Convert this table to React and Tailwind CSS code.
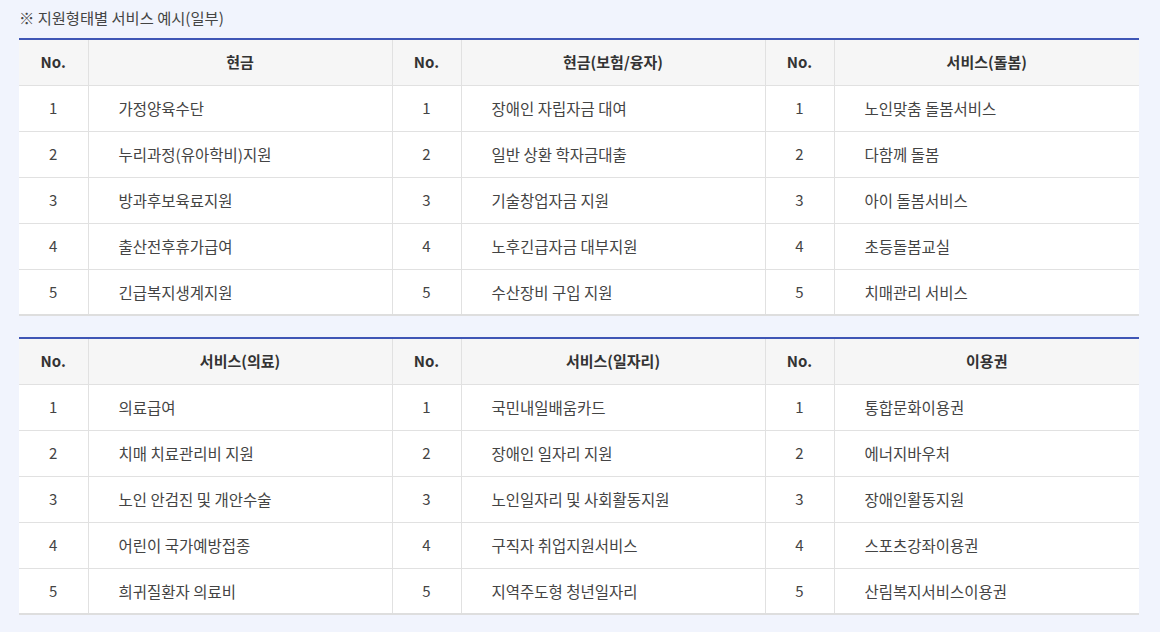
const tables = [
  {
    heads: ['현금', '현금(보험/융자)', '서비스(돌봄)'],
    cols: [
      ['가정양육수단', '누리과정(유아학비)지원', '방과후보육료지원', '출산전후휴가급여', '긴급복지생계지원'],
      ['장애인 자립자금 대여', '일반 상환 학자금대출', '기술창업자금 지원', '노후긴급자금 대부지원', '수산장비 구입 지원'],
      ['노인맞춤 돌봄서비스', '다함께 돌봄', '아이 돌봄서비스', '초등돌봄교실', '치매관리 서비스'],
    ],
  },
  {
    heads: ['서비스(의료)', '서비스(일자리)', '이용권'],
    cols: [
      ['의료급여', '치매 치료관리비 지원', '노인 안검진 및 개안수술', '어린이 국가예방접종', '희귀질환자 의료비'],
      ['국민내일배움카드', '장애인 일자리 지원', '노인일자리 및 사회활동지원', '구직자 취업지원서비스', '지역주도형 청년일자리'],
      ['통합문화이용권', '에너지바우처', '장애인활동지원', '스포츠강좌이용권', '산림복지서비스이용권'],
    ],
  },
];

function ServiceTable({ data }) {
  return (
    <table className="w-[1120px] table-fixed border-collapse border-t-2 border-t-[#3f56b6] border-b-2 border-b-[#dedede] bg-white">
      <colgroup>
        <col className="w-[69px]" />
        <col className="w-[304px]" />
        <col className="w-[69px]" />
        <col className="w-[304px]" />
        <col className="w-[69px]" />
        <col />
      </colgroup>
      <thead>
        <tr className="h-[46px] bg-[#f6f6f6] border-b border-[#e1e1e1]">
          {data.heads.map((h, i) => (
            <>
              <th key={'n' + i} className={`font-bold text-[15px] text-[#333] text-center ${i > 0 ? 'border-l border-[#e1e1e1]' : ''}`}>No.</th>
              <th key={'h' + i} className="font-bold text-[15px] text-[#333] text-center border-l border-[#e1e1e1]">{h}</th>
            </>
          ))}
        </tr>
      </thead>
      <tbody>
        {[0, 1, 2, 3, 4].map(r => (
          <tr key={r} className={`h-[46px] ${r < 4 ? 'border-b border-[#e1e1e1]' : ''}`}>
            {data.cols.map((col, i) => (
              <>
                <td key={'n' + i} className={`text-center text-[15px] text-[#444] ${i > 0 ? 'border-l border-[#e1e1e1]' : ''}`}>{r + 1}</td>
                <td key={'t' + i} className="pl-[30px] text-[15.5px] text-[#444] border-l border-[#e1e1e1]">{col[r]}</td>
              </>
            ))}
          </tr>
        ))}
      </tbody>
    </table>
  );
}

export default function App() {
  return (
    <div className="min-h-screen w-[1160px] h-[632px] bg-[#f1f4fd] px-[19px] font-['Noto_Sans_CJK_KR',sans-serif] leading-[20px]">
      <p className="pt-[7px] mb-[11px] text-[15.3px] text-[#444]">※ 지원형태별 서비스 예시(일부)</p>
      <div className="flex flex-col gap-[21px]">
        {tables.map((t, i) => (
          <ServiceTable key={i} data={t} />
        ))}
      </div>
    </div>
  );
}
